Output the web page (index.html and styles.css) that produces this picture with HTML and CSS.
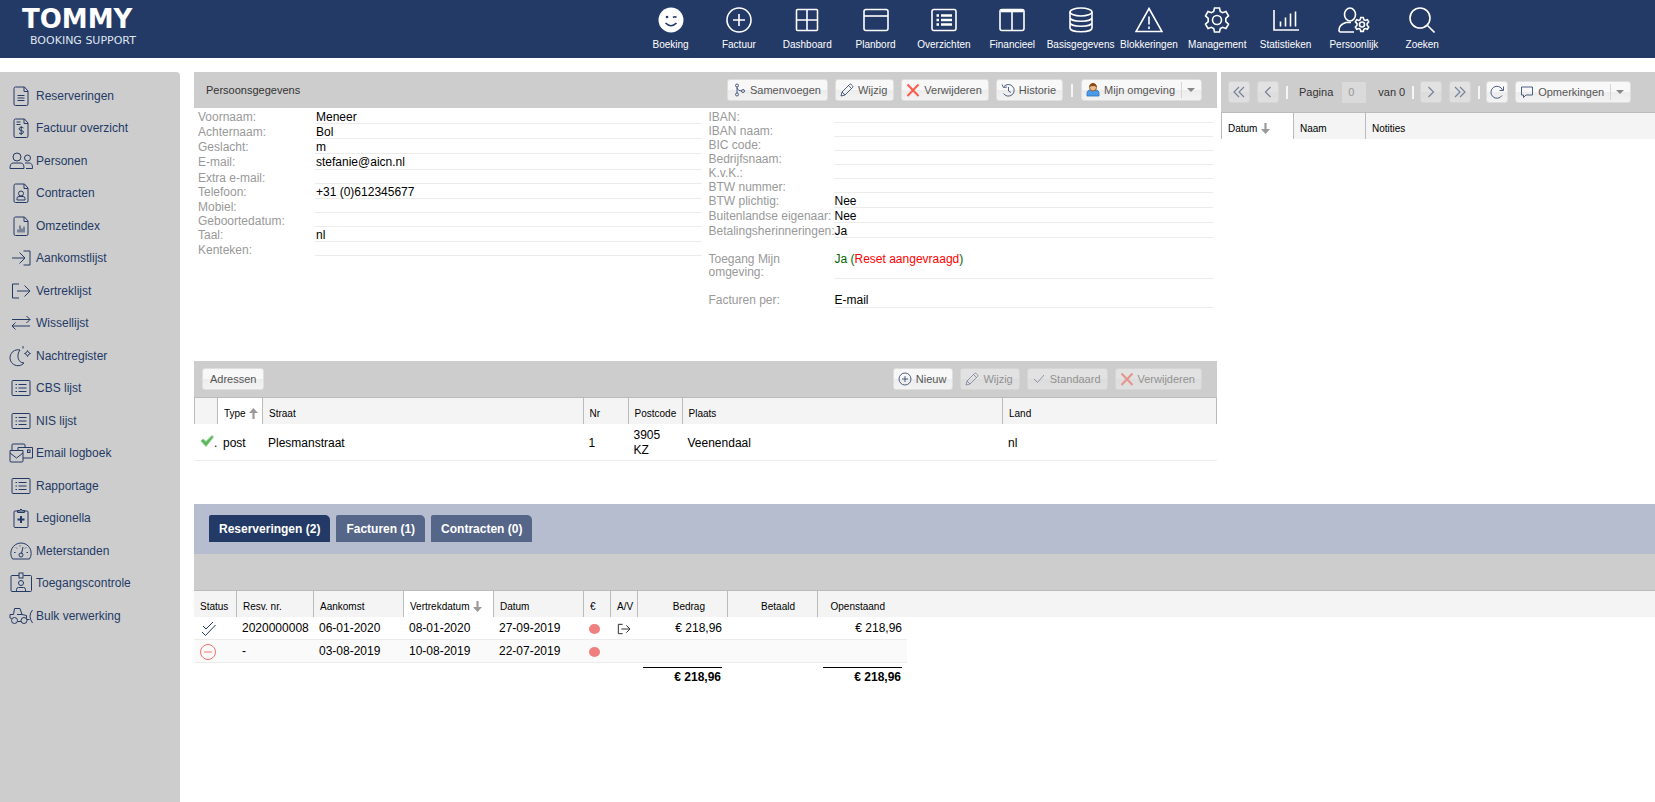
FILE: index.html
```html
<!DOCTYPE html>
<html lang="nl">

<head>
  <meta charset="utf-8">
  <title>Tommy Booking Support</title>
  <link rel="stylesheet" href="styles.css">
</head>

<body>

  <!-- Shared icons -->
  <svg class="sprite" aria-hidden="true">
    <symbol id="i-doc" viewBox="0 0 24 24"><path d="M15.500 3H6.500a1.500 1.500 0 0 0-1.500 1.500v15.500a1.500 1.500 0 0 0 1.500 1.500h11a1.500 1.500 0 0 0 1.500-1.500V7zM15 3v4.500h4"/></symbol>
    <symbol id="i-list" viewBox="0 0 24 24"><rect x="3" y="4.500" width="18" height="15" rx="1"/><path d="M9.500 8.500h8M9.500 12h8M9.500 15.500h8M6.500 8.500h1.500M6.500 12h1.500M6.500 15.500h1.500"/></symbol>
    <symbol id="i-pencil" viewBox="0 0 14 14"><path d="M1 13l1-4L9.500 1.500a1.200 1.200 0 0 1 1.700 0l1.300 1.300a1.200 1.200 0 0 1 0 1.700L5 12zM2 9l3 3M8.500 2.500l3 3"/></symbol>
    <symbol id="i-cross" viewBox="0 0 14 14"><path d="M1.500 1.500l11 11.500M12.500 1.500L1.500 13"/></symbol>
    <symbol id="i-out" viewBox="0 0 24 24"><path d="M10 5H3.500v14H10M8 12h13M15.500 6.500L21 12l-5.500 5.500"/></symbol>
    <symbol id="i-down" viewBox="0 0 10 12"><path d="M3.800 0h2.400v6.500H10L5 12 0 6.500h3.800z"/></symbol>
    <symbol id="i-up" viewBox="0 0 10 12"><path d="M3.800 12h2.400V5.500H10L5 0 0 5.500h3.800z"/></symbol>
  </svg>

  <header class="topbar">
    <a class="logo" href="#">
      <span class="logo-name">TOMMY</span>
      <span class="logo-sub">BOOKING SUPPORT</span>
    </a>
    <nav class="topnav">
      <a href="#"><svg viewBox="0 0 26 26"><circle class="solid" cx="13" cy="13" r="12.500"/><circle class="ink-fill" cx="9" cy="10" r="1.300"/><path class="ink" d="M15 10.500q2-1.500 3.500 0M7.500 16q5.500 5.500 11 0"/></svg>Boeking</a>
      <a href="#"><svg viewBox="0 0 26 26"><circle cx="13" cy="13" r="12"/><path d="M13 7v12M7 13h12"/></svg>Factuur</a>
      <a href="#"><svg viewBox="0 0 26 26"><rect x="2.500" y="2.500" width="21" height="21" rx="1"/><path d="M13 2.500v21M2.500 13h21"/></svg>Dashboard</a>
      <a href="#"><svg viewBox="0 0 26 26"><rect x="1" y="2.500" width="24" height="21" rx="2"/><path d="M1 9h24"/></svg>Planbord</a>
      <a href="#"><svg viewBox="0 0 26 26"><rect x="1" y="2.500" width="24" height="21" rx="2"/><path class="thick" d="M10 8.500h11M10 13h11M10 17.500h11M5.500 8.500H8M5.500 13H8M5.500 17.500H8"/></svg>Overzichten</a>
      <a href="#"><svg viewBox="0 0 26 26"><rect x="1" y="2.500" width="24" height="21" rx="2"/><path d="M13 4v19"/><path class="thick" d="M2 4h22"/></svg>Financieel</a>
      <a href="#"><svg viewBox="0 0 26 26"><ellipse cx="13" cy="5" rx="11" ry="4"/><path d="M2 5v16c0 5 22 5 22 0V5M2 10.500c0 5 22 5 22 0M2 15.500c0 5 22 5 22 0"/></svg>Basisgegevens</a>
      <a href="#"><svg class="wide" viewBox="0 0 28 26"><path d="M14 1.500L27 24.500H1zM14 9.500v8M14 19.500v2.500"/></svg>Blokkeringen</a>
      <a href="#"><svg viewBox="0 0 26 26"><circle cx="13" cy="13" r="4.500"/><path d="M10.500 1h5l.8 3.500 2.300 1.200 3.400-1.200 2.500 4.300-2.700 2.500v3.400l2.700 2.500-2.500 4.300-3.400-1.200-2.300 1.200-.8 3.500h-5l-.8-3.500-2.300-1.200L4 21.500l-2.500-4.300 2.700-2.500v-3.400L1.500 8.800 4 4.500l3.400 1.200 2.300-1.200z"/></svg>Management</a>
      <a href="#"><svg viewBox="0 0 26 26"><path d="M1 3v20h25M7.500 19.500v-5M12.500 19.500v-9M17.500 19.500V6.500M22.500 19.500v-15"/></svg>Statistieken</a>
      <a href="#"><svg class="wider" viewBox="0 0 32 26"><ellipse cx="12" cy="7.500" rx="5.500" ry="6.500"/><path d="M16 25H2.500C1 25 1 24 1 23c0-4 2-6 7-7.500h5"/><circle cx="24" cy="17.500" r="2.500"/><path d="M22.800 10.500h2.500l.6 2.200 1.300.7 2.200-.7 1.300 2.200-1.600 1.700v1.700l1.600 1.700-1.300 2.200-2.200-.7-1.300.7-.6 2.200h-2.500l-.6-2.200-1.300-.7-2.200.7-1.300-2.200 1.600-1.700v-1.700l-1.600-1.700 1.300-2.200 2.200.7 1.300-.7z"/></svg>Persoonlijk</a>
      <a href="#"><svg viewBox="0 0 26 26"><circle cx="11" cy="11" r="10"/><path d="M18.500 18.500L25.500 25.500"/></svg>Zoeken</a>
    </nav>
  </header>

  <div class="page">

    <!-- Left menu -->
    <aside class="sidebar">
      <ul>
        <li><a href="#"><svg viewBox="0 0 24 24"><use href="#i-doc"/><path d="M8.500 11.500h7M8.500 14h7M8.500 16.500h7"/></svg>Reserveringen</a></li>
        <li><a href="#"><svg viewBox="0 0 24 24"><use href="#i-doc"/><path d="M7.500 6h4M7.500 8.500h4M14.500 12c-1-1-4.500-1-4.500 1s4.500 1 4.500 3-3.500 2-4.500 1M12.200 10v9"/></svg>Factuur overzicht</a></li>
        <li><a href="#"><svg viewBox="0 0 24 24"><circle cx="8" cy="8" r="4"/><path d="M1 19.500c0-4 1-5.500 4-5.500h6c3 0 4 1.500 4 5.500zM17 19.500h6.500c0-4-1-5.500-3.500-5.500h-4"/><circle cx="18.500" cy="9" r="3"/></svg>Personen</a></li>
        <li><a href="#"><svg viewBox="0 0 24 24"><use href="#i-doc"/><circle cx="12" cy="12.500" r="2.500"/><path d="M8 19v-1.500q0-2 2-2h4q2 0 2 2V19z"/></svg>Contracten</a></li>
        <li><a href="#"><svg viewBox="0 0 24 24"><use href="#i-doc"/><path d="M9 18.500v-3M11 18.500v-7M13 18.500v-4M15 18.500v-6"/></svg>Omzetindex</a></li>
        <li><a href="#"><svg viewBox="0 0 24 24"><path d="M14.500 5h6.500v14h-6.500M3 12h13M10.500 6.500L16 12l-5.500 5.500"/></svg>Aankomstlijst</a></li>
        <li><a href="#"><svg viewBox="0 0 24 24"><use href="#i-out"/></svg>Vertreklijst</a></li>
        <li><a href="#"><svg viewBox="0 0 24 24"><path d="M3 8.500h18M17.500 5L21 8.500 17.500 12M21 15H3M6.500 11.500L3 15l3.500 3.500"/></svg>Wissellijst</a></li>
        <li><a href="#"><svg viewBox="0 0 24 24"><path d="M11 6a8 8 0 1 0 4 13C9 19 7 11 11 6zM14 2v2.500M18.500 6.500l1 2 2 1-2 1-1 2-1-2-2-1 2-1z"/></svg>Nachtregister</a></li>
        <li><a href="#"><svg viewBox="0 0 24 24"><use href="#i-list"/></svg>CBS lijst</a></li>
        <li><a href="#"><svg viewBox="0 0 24 24"><use href="#i-list"/></svg>NIS lijst</a></li>
        <li><a href="#"><svg viewBox="0 0 24 24"><path d="M1 9.500h13V20a1 1 0 0 1-1 1H2a1 1 0 0 1-1-1zM1 12l6.500 5 6.500-5M3 9V4a1 1 0 0 1 1-1h11a1 1 0 0 1 1 1v2M9 9V6.500h14.500V17H14"/><rect x="18.500" y="9" width="2.500" height="2.500"/></svg>Email logboek</a></li>
        <li><a href="#"><svg viewBox="0 0 24 24"><use href="#i-list"/></svg>Rapportage</a></li>
        <li><a href="#"><svg viewBox="0 0 24 24"><rect x="5" y="5" width="14" height="16.500" rx="1"/><path d="M8.500 6.500v-2h2q1.500-3 3 0h2v2z"/><path class="thick" d="M12 10v7M8.500 13.500h7"/></svg>Legionella</a></li>
        <li><a href="#"><svg viewBox="0 0 24 24"><path d="M3.500 20C-1 13 4 4 12 4s13 9 8.500 16zM12.500 14.500L14 8M5 13.500h1.500M17.500 13.500H19M7 8.500l1 1M11 6.500v1M17 8.500l-1 1"/><circle cx="12" cy="16" r="2"/></svg>Meterstanden</a></li>
        <li><a href="#"><svg viewBox="0 0 24 24"><path d="M10 4.500H3a1 1 0 0 0-1 1v14a1 1 0 0 0 1 1h18.500a1 1 0 0 0 1-1v-14a1 1 0 0 0-1-1h-7"/><rect x="10" y="2" width="4" height="5"/><circle cx="12" cy="12" r="2.500"/><path d="M7.500 20.500v-2q0-2 2-2h5q2 0 2 2v2"/></svg>Toegangscontrole</a></li>
        <li><a href="#"><svg viewBox="0 0 24 24"><circle cx="5.500" cy="16.500" r="3"/><circle cx="15" cy="16.500" r="3"/><path d="M8.500 17.500H12M2.500 14.500L1 14v-3.500h3.500l1-6h5.500l2 6 4.500 1v3M8 10.500h5M23.500 6q-5 6 0 13M18 15.500h2.500"/></svg>Bulk verwerking</a></li>
      </ul>
    </aside>

    <main class="content">

      <div class="columns">
        <div class="column-left">

          <!-- Person details -->
          <section class="person">
            <div class="toolbar">
              <h2>Persoonsgegevens</h2>
              <div class="actions">
                <button class="btn" type="button"><svg viewBox="0 0 14 14"><circle cx="5" cy="2.500" r="1.500"/><circle cx="5" cy="11.500" r="1.500"/><circle cx="11" cy="8" r="1.500"/><path d="M5 4v6M5 5q1 3 4.500 3"/></svg>Samenvoegen</button>
                <button class="btn" type="button"><svg viewBox="0 0 14 14"><use href="#i-pencil"/></svg>Wijzig</button>
                <button class="btn" type="button"><svg class="red" viewBox="0 0 14 14"><use href="#i-cross"/></svg>Verwijderen</button>
                <button class="btn" type="button"><svg viewBox="0 0 14 14"><path d="M3 3.500a5.800 5.800 0 1 1-.5 7M1 1.500L2.500 4.500 6 4M7.500 4v4l2.500 1.500"/></svg>Historie</button>
                <span class="sep"></span>
                <span class="split">
                  <button class="btn" type="button"><svg viewBox="0 0 14 14"><path fill="#4a9be8" stroke="#2c6fc0" d="M1 13V9.500Q1.500 7 4 7h6q2.500 0 3 2.500V13z"/><circle fill="#e8b98a" stroke="#8a4a14" cx="7" cy="4.500" r="3.500"/><path fill="#8a4a14" stroke="none" d="M3 4q1-4 4-4t4 4Q7 2 3 4z"/></svg>Mijn omgeving</button>
                  <button class="btn-arrow" type="button" aria-label="Meer"></button>
                </span>
              </div>
            </div>

            <div class="details">
              <dl>
                <div><dt>Voornaam:</dt><dd>Meneer</dd></div>
                <div><dt>Achternaam:</dt><dd>Bol</dd></div>
                <div><dt>Geslacht:</dt><dd>m</dd></div>
                <div class="mail"><dt>E-mail:</dt><dd>stefanie@aicn.nl</dd></div>
                <div class="empty"><dt>Extra e-mail:</dt><dd></dd></div>
                <div><dt>Telefoon:</dt><dd>+31 (0)612345677</dd></div>
                <div class="empty"><dt>Mobiel:</dt><dd></dd></div>
                <div class="empty"><dt>Geboortedatum:</dt><dd></dd></div>
                <div><dt>Taal:</dt><dd>nl</dd></div>
                <div class="empty"><dt>Kenteken:</dt><dd></dd></div>
              </dl>
              <dl class="wide-labels">
                <div class="empty"><dt>IBAN:</dt><dd></dd></div>
                <div class="empty"><dt>IBAN naam:</dt><dd></dd></div>
                <div class="empty"><dt>BIC code:</dt><dd></dd></div>
                <div class="empty"><dt>Bedrijfsnaam:</dt><dd></dd></div>
                <div class="empty"><dt>K.v.K.:</dt><dd></dd></div>
                <div class="empty"><dt>BTW nummer:</dt><dd></dd></div>
                <div><dt>BTW plichtig:</dt><dd>Nee</dd></div>
                <div><dt>Buitenlandse eigenaar:</dt><dd>Nee</dd></div>
                <div><dt>Betalingsherinneringen:</dt><dd>Ja</dd></div>
                <div class="spaced"><dt>Toegang Mijn<br>omgeving:</dt><dd class="yes">Ja (<span class="warn">Reset aangevraagd</span>)</dd></div>
                <div class="spaced"><dt>Facturen per:</dt><dd>E-mail</dd></div>
              </dl>
            </div>
          </section>

          <!-- Addresses -->
          <section class="addresses">
            <div class="toolbar">
              <button class="btn plain" type="button">Adressen</button>
              <div class="actions">
                <button class="btn" type="button"><svg viewBox="0 0 14 14"><circle cx="7" cy="7" r="6"/><path d="M7 4v6M4 7h6"/></svg>Nieuw</button>
                <button class="btn" type="button" disabled><svg viewBox="0 0 14 14"><use href="#i-pencil"/></svg>Wijzig</button>
                <button class="btn" type="button" disabled><svg viewBox="0 0 14 14"><path d="M2 7l3.500 3.500L12 3"/></svg>Standaard</button>
                <button class="btn" type="button" disabled><svg class="red" viewBox="0 0 14 14"><use href="#i-cross"/></svg>Verwijderen</button>
              </div>
            </div>
            <table class="grid address-grid">
              <colgroup>
                <col class="w-check"><col class="w-type"><col><col class="w-type"><col class="w-postcode"><col><col class="w-land">
              </colgroup>
              <thead>
                <tr>
                  <th></th>
                  <th class="sorted">Type <svg viewBox="0 0 10 12"><use href="#i-up"/></svg></th>
                  <th>Straat</th>
                  <th>Nr</th>
                  <th>Postcode</th>
                  <th>Plaats</th>
                  <th>Land</th>
                </tr>
              </thead>
              <tbody>
                <tr>
                  <td class="check"><svg viewBox="0 0 14 12"><path d="M1 6l2-2 3 2.500L12 .500 13.500 2 6 11.500z"/></svg>.</td>
                  <td>post</td>
                  <td>Plesmanstraat</td>
                  <td>1</td>
                  <td>3905 KZ</td>
                  <td>Veenendaal</td>
                  <td>nl</td>
                </tr>
              </tbody>
            </table>
          </section>

        </div>

        <!-- Notes -->
        <section class="notes">
          <div class="toolbar pager">
            <button class="btn-icon" type="button" disabled aria-label="Eerste pagina"><svg viewBox="0 0 14 14"><path d="M7 2L2 7l5 5M12 2L7 7l5 5"/></svg></button>
            <button class="btn-icon" type="button" disabled aria-label="Vorige pagina"><svg viewBox="0 0 14 14"><path d="M9.500 2l-5 5 5 5"/></svg></button>
            <span class="sep"></span>
            <label for="pageNumber">Pagina</label>
            <input id="pageNumber" type="text" value="0" disabled>
            <span class="total">van 0</span>
            <span class="sep"></span>
            <button class="btn-icon" type="button" disabled aria-label="Volgende pagina"><svg viewBox="0 0 14 14"><path d="M4.500 2l5 5-5 5"/></svg></button>
            <button class="btn-icon" type="button" disabled aria-label="Laatste pagina"><svg viewBox="0 0 14 14"><path d="M2 2l5 5-5 5M7 2l5 5-5 5"/></svg></button>
            <span class="sep"></span>
            <button class="btn-icon" type="button" aria-label="Vernieuwen"><svg viewBox="0 0 14 14"><path d="M12 10.500A6 6 0 1 1 12.500 5M13.500 1.500V5.500H9.500"/></svg></button>
            <span class="split">
              <button class="btn" type="button"><svg viewBox="0 0 14 14"><path d="M1.500 2h11v8H6l-2.500 2.500V10h-2z"/></svg>Opmerkingen</button>
              <button class="btn-arrow" type="button" aria-label="Meer"></button>
            </span>
          </div>
          <table class="grid">
            <colgroup>
              <col class="w-note"><col class="w-note"><col>
            </colgroup>
            <thead>
              <tr>
                <th class="sorted">Datum <svg viewBox="0 0 10 12"><use href="#i-down"/></svg></th>
                <th>Naam</th>
                <th>Notities</th>
              </tr>
            </thead>
          </table>
        </section>
      </div>

      <!-- Bookings, invoices and contracts -->
      <section class="bookings">
        <div class="tabs">
          <button class="tab active" type="button">Reserveringen (2)</button>
          <button class="tab" type="button">Facturen (1)</button>
          <button class="tab" type="button">Contracten (0)</button>
        </div>
        <div class="toolbar"></div>
        <table class="grid booking-grid">
          <colgroup>
            <col class="w-status"><col class="w-number"><col class="w-date"><col class="w-date"><col class="w-date"><col class="w-small"><col class="w-small"><col class="w-date"><col class="w-date"><col class="w-date"><col>
          </colgroup>
          <thead>
            <tr>
              <th>Status</th>
              <th>Resv. nr.</th>
              <th>Aankomst</th>
              <th class="sorted">Vertrekdatum <svg viewBox="0 0 10 12"><use href="#i-down"/></svg></th>
              <th>Datum</th>
              <th>€</th>
              <th>A/V</th>
              <th class="amount">Bedrag</th>
              <th class="amount">Betaald</th>
              <th class="amount">Openstaand</th>
              <th class="rest"></th>
            </tr>
          </thead>
          <tbody>
            <tr>
              <td><svg class="status" viewBox="0 0 16 16"><path d="M3 5l3 3L13 1M2 11l3.500 3.500L15.500 4"/></svg></td>
              <td>2020000008</td>
              <td>06-01-2020</td>
              <td>08-01-2020</td>
              <td>27-09-2019</td>
              <td><span class="dot"></span></td>
              <td><svg class="leave" viewBox="0 0 24 24"><use href="#i-out"/></svg></td>
              <td class="amount">€ 218,96</td>
              <td></td>
              <td class="amount">€ 218,96</td>
            </tr>
            <tr>
              <td><svg class="status cancelled" viewBox="0 0 16 16"><circle cx="8" cy="8" r="7.500"/><path d="M4 8h8"/></svg></td>
              <td>-</td>
              <td>03-08-2019</td>
              <td>10-08-2019</td>
              <td>22-07-2019</td>
              <td><span class="dot"></span></td>
              <td></td>
              <td></td>
              <td></td>
              <td></td>
            </tr>
          </tbody>
          <tfoot>
            <tr>
              <td colspan="7"></td>
              <td><div class="sum">€ 218,96</div></td>
              <td></td>
              <td><div class="sum">€ 218,96</div></td>
            </tr>
          </tfoot>
        </table>
      </section>

    </main>
  </div>

</body>

</html>
```

FILE: styles.css
```css
* {
  box-sizing: border-box;
}

body {
  margin: 0;
  min-height: 100vh;
  display: flex;
  flex-direction: column;
  font-family: 'Liberation Sans', Arial, sans-serif;
  font-size: 12px;
  color: #000;
  background-color: #fff;
}

a {
  color: inherit;
  text-decoration: none;
}

button,
input {
  font-family: inherit;
  font-size: 11px;
}

svg {
  fill: none;
  stroke: currentColor;
  flex: none;
}

.sprite {
  position: absolute;
  width: 0;
  height: 0;
}

/* Top bar */
.topbar {
  height: 58px;
  display: flex;
  justify-content: space-between;
  background-color: #243a66;
  color: #fff;
}

.logo {
  padding: 4px 0 0 22px;
  display: flex;
  flex-direction: column;
  font-family: 'DejaVu Sans', sans-serif;
}

.logo-name {
  font-size: 26px;
  line-height: 30px;
  font-weight: bold;
}

.logo-sub {
  padding-left: 8px;
  font-size: 11px;
  line-height: 14px;
  color: #dfe4ee;
}

.topnav {
  width: 820px;
  margin-right: 12%;
  display: grid;
  grid-template-columns: repeat(12, 1fr);
}

.topnav a {
  padding-top: 7px;
  display: flex;
  flex-direction: column;
  align-items: center;
  gap: 6px;
  font-size: 10px;
  line-height: 12px;
}

.topnav svg {
  width: 26px;
  height: 26px;
  stroke-width: 1.6;
}

.topnav svg.wide {
  width: 28px;
}

.topnav svg.wider {
  width: 32px;
}

.topnav .thick {
  stroke-width: 2.6;
}

.topnav .solid {
  fill: #fff;
  stroke: none;
}

.topnav .ink {
  stroke: #243a66;
}

.topnav .ink-fill {
  fill: #243a66;
  stroke: none;
}

/* Page */
.page {
  flex: 1;
  margin-top: 14px;
  display: flex;
  gap: 14px;
}

.sidebar {
  width: 180px;
  flex: none;
  background-color: #cdcdcd;
  border-top-right-radius: 4px;
}

.sidebar ul {
  margin: 0;
  padding: 7px 0 0;
  list-style: none;
}

.sidebar li {
  height: 32px;
}

.sidebar li:nth-child(even) {
  height: 33px;
}

.sidebar a {
  height: 33px;
  padding-left: 9px;
  display: flex;
  align-items: center;
  gap: 3px;
  color: #243a66;
}

.sidebar svg {
  width: 24px;
  height: 24px;
  stroke-width: 1;
}

.sidebar .thick {
  stroke-width: 2;
}

.content {
  flex: 1;
  min-width: 0;
}

.columns {
  display: grid;
  grid-template-columns: minmax(0, 1fr) 434px;
  gap: 4px;
}

/* Toolbars */
.toolbar {
  min-height: 36px;
  padding: 0 15px 0 8px;
  display: flex;
  align-items: center;
  justify-content: space-between;
  background-color: #cdcdcd;
}

.toolbar h2 {
  margin: 0;
  padding-left: 4px;
  font-size: 11px;
  font-weight: normal;
  color: #333;
}

.actions {
  display: flex;
  align-items: center;
  gap: 7px;
}

.btn,
.btn-icon,
.split {
  height: 22px;
  border: 1px solid #dedede;
  border-radius: 3px;
  background-image: linear-gradient(#f8f8f8 50%, #ececec 50%, #f3f3f3);
  color: #555;
}

.btn {
  padding: 0 6px 0 4px;
  display: flex;
  align-items: center;
  gap: 4px;
}

.btn.plain {
  padding: 0 7px;
}

.btn svg,
.btn-icon svg {
  width: 14px;
  height: 14px;
  color: #243a66;
  stroke-width: 0.8;
}

.btn svg.red {
  color: #fb5c4c;
  stroke-width: 2;
}

.btn:disabled,
.btn-icon:disabled {
  opacity: 0.5;
}

.btn-icon {
  width: 22px;
  padding: 0;
  display: flex;
  align-items: center;
  justify-content: center;
}

.btn-icon:disabled svg {
  stroke-width: 1.2;
}

.split {
  display: flex;
}

.split .btn {
  height: 20px;
  border: 0;
  background: none;
}

.btn-arrow {
  width: 20px;
  margin: 2px 0;
  padding: 0;
  border: 0;
  border-left: 1px solid #d5d5d5;
  background: none;
}

.btn-arrow::before {
  content: "";
  display: block;
  width: 0;
  margin-left: 5px;
  border: 4px solid transparent;
  border-top-color: #888;
  border-bottom: 0;
}

.sep {
  width: 2px;
  height: 13px;
  margin: 0 1px;
  background-color: #f5f5f5;
}

.pager {
  min-height: 40px;
  padding: 0 7px;
  justify-content: flex-start;
  gap: 7px;
  font-size: 11px;
  color: #333;
}

.pager .sep {
  margin: 0 -1px 0 0;
}

.pager label {
  padding: 0 2px 0 5px;
}

.pager input {
  width: 24px;
  height: 21px;
  padding: 0 6px;
  border: 0;
  background-color: #dadada;
  color: #999;
}

.pager .total {
  padding-left: 5px;
}

/* Person details */
.person {
  min-height: 289px;
}

.details {
  padding-top: 1px;
  display: grid;
  grid-template-columns: 1fr 1fr;
}

.details dl {
  margin: 0;
  padding: 0 4px;
}

.details dl > div {
  height: 15px;
  display: grid;
  grid-template-columns: 117px 1fr;
  grid-template-rows: 100%;
  line-height: 16px;
}

.details .wide-labels {
  padding-left: 3px;
}

.details .wide-labels > div {
  grid-template-columns: 125px 1fr;
}

.details dl > .empty {
  height: 14px;
}

.details dl > .mail {
  height: 16px;
  line-height: 17px;
}

.details dl > .spaced {
  height: auto;
  padding-top: 15px;
  grid-template-rows: auto;
  line-height: 13px;
}

.details dt {
  color: #999;
  white-space: nowrap;
}

.details dd {
  margin: 0;
  padding-left: 1px;
  min-height: 14px;
  border-bottom: 1px solid #ececec;
}

.details .yes {
  color: #006400;
}

.details .warn {
  color: #f00;
}

/* Grids */
.grid {
  width: 100%;
  table-layout: fixed;
  border-collapse: separate;
  border-spacing: 0;
}

.grid th {
  height: 27px;
  padding: 4px 0 0 6px;
  border-top: 1px solid #bbb;
  border-left: 1px solid #bbb;
  background-color: #f4f4f4;
  font-size: 10px;
  font-weight: normal;
  text-align: left;
  white-space: nowrap;
}

.grid th.sorted {
  background-color: #fff;
}

.grid th svg {
  width: 9px;
  height: 11px;
  margin-left: 1px;
  fill: #999;
  stroke: none;
  vertical-align: -2px;
}

.grid td {
  padding: 1px 5px 0 6px;
  line-height: 15px;
}

.w-check { width: 23px; }
.w-type { width: 45px; }
.w-postcode { width: 54px; }
.w-land { width: 215px; }
.w-note { width: 72px; }
.w-status { width: 42px; }
.w-number { width: 77px; }
.w-date { width: 90px; }
.w-small { width: 27px; }

.address-grid th:last-child {
  border-right: 1px solid #bbb;
}

.address-grid td {
  height: 37px;
  padding-top: 2px;
  border-bottom: 1px solid #ececec;
}

.address-grid .check {
  padding: 2px 0 0 6px;
  white-space: nowrap;
}

.check svg {
  width: 14px;
  height: 12px;
  fill: #5cb85c;
  stroke: #8fce8f;
}

/* Bookings */
.bookings {
  margin-top: 43px;
}

.tabs {
  height: 50px;
  padding: 11px 15px;
  display: flex;
  gap: 6px;
  background-color: #b5bdce;
}

.tab {
  height: 27px;
  padding: 0 10px;
  border: 0;
  border-radius: 2px 5px 0 0;
  background-color: #566689;
  color: #fff;
  font-size: 12px;
  font-weight: bold;
}

.tab.active {
  background-color: #243a66;
}

.booking-grid th:first-child,
.booking-grid th.rest {
  border-left: 0;
}

.booking-grid th.amount {
  padding-right: 22px;
  text-align: right;
}

.booking-grid .amount {
  text-align: right;
}

.booking-grid tbody td {
  height: 23px;
  border-bottom: 1px solid #ececec;
  white-space: nowrap;
}

.booking-grid tbody tr:nth-child(even) td {
  background-color: #fafafa;
}

.booking-grid td svg,
.dot {
  display: block;
}

.status {
  width: 16px;
  height: 16px;
  color: #243a66;
}

.status.cancelled {
  color: #f6706a;
}

.leave {
  width: 16px;
  height: 16px;
  stroke-width: 1.5;
  color: #333;
}

.dot {
  width: 11px;
  height: 10px;
  border-radius: 50%;
  background-color: #f08080;
}

.booking-grid tfoot td {
  padding-top: 4px;
}

.sum {
  padding: 2px 1px 0 0;
  border-top: 1px solid #000;
  font-weight: bold;
  text-align: right;
}
```
